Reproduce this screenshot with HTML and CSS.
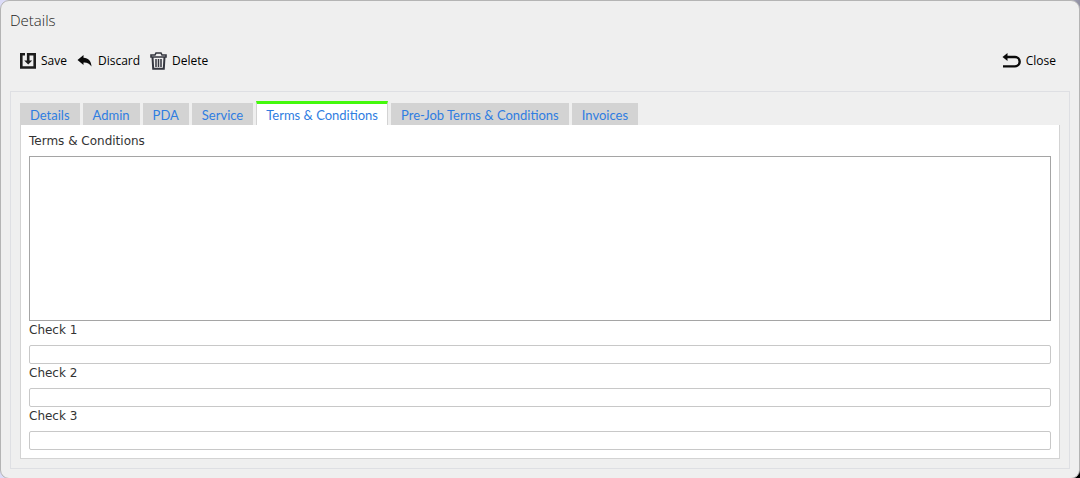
FILE: index.html
```html
<!DOCTYPE html>
<html lang="en">
<head>
  <meta charset="UTF-8" />
  <meta name="viewport" content="width=device-width, initial-scale=1.0" />
  <title>Details</title>
  <link rel="stylesheet" href="styles.css">
</head>
<body>

  <main class="dialog">
    <h1 class="dialog-title">Details</h1>

    <!-- Toolbar -->
    <div class="toolbar">
      <button type="button" class="tool">
        <svg width="16" height="16" viewBox="0 0 16 16" fill="none" stroke="#1c1c1c" aria-hidden="true">
          <path d="M5 1.200H1.300V14.500H14.700V1.200H8.200V9" stroke-width="2.600" />
          <path d="M4.200 7.500H12.200L8.200 11.500Z" fill="#1c1c1c" stroke="none" />
        </svg>
        Save
      </button>
      <button type="button" class="tool">
        <svg width="16" height="16" viewBox="0 0 16 16" aria-hidden="true">
          <path d="M6.500 2L0.500 7L6.500 12V9.500C10 9.300 12.500 10.400 14.500 13.500C14.400 8.500 11.500 5 6.500 4.800Z" fill="#0a0a0a" />
        </svg>
        Discard
      </button>
      <button type="button" class="tool">
        <svg width="17" height="18" viewBox="0 0 17 18" fill="none" stroke="#34363f" aria-hidden="true">
          <path d="M1 5V3H5L6 1H11L12 3H16V5Z" stroke-width="1.600" />
          <path d="M2.500 5L3.200 16.800H13.800L14.500 5" stroke-width="2" />
          <path d="M6 7V15M8.500 7V15M11 7V15" stroke-width="1.500" />
        </svg>
        Delete
      </button>
      <button type="button" class="tool tool-close">
        <svg width="19" height="16" viewBox="0 0 19 16" fill="none" stroke="#0a0a0a" aria-hidden="true">
          <path d="M3 4H13A4.700 4.700 0 0 1 13 13.400H1" stroke-width="2.400" />
          <path d="M5.500 0V8L0.500 4Z" fill="#0a0a0a" stroke="none" />
        </svg>
        Close
      </button>
    </div>

    <div class="panel">
      <!-- Tabs -->
      <nav class="tabs">
        <a href="#details">Details</a>
        <a href="#admin">Admin</a>
        <a href="#pda">PDA</a>
        <a href="#service">Service</a>
        <a href="#terms" class="active">Terms &amp; Conditions</a>
        <a href="#prejob">Pre-Job Terms &amp; Conditions</a>
        <a href="#invoices">Invoices</a>
      </nav>

      <form class="tab-body" id="terms">
        <label for="termsText">Terms &amp; Conditions</label>
        <textarea id="termsText"></textarea>
        <label for="check1">Check 1</label>
        <input type="text" id="check1" />
        <label for="check2">Check 2</label>
        <input type="text" id="check2" />
        <label for="check3">Check 3</label>
        <input type="text" id="check3" />
      </form>
    </div>
  </main>

</body>
</html>
```
FILE: styles.css
```css
* {
  box-sizing: border-box;
}
body {
  margin: 0;
  font-family: "Open Sans", sans-serif;
  font-size: 12px;
  background: linear-gradient(100deg, #dcdcf8 90%, #000 98%);
}
.dialog {
  padding: 9px;
  background-color: #efefef;
  border: 1px solid #b4b4b4;
  border-radius: 9px;
}
.dialog-title {
  margin: 0;
  font-size: 15px;
  font-weight: 300;
  line-height: 20px;
  color: #222;
}
.toolbar {
  display: flex;
  align-items: center;
  gap: 10px;
  height: 40px;
  margin: 11px 14px 10px 10px;
}
.tool {
  display: flex;
  align-items: center;
  gap: 5px;
  padding: 0;
  border: none;
  background: none;
  font-family: inherit;
  font-size: 12px;
  line-height: 16px;
  color: #000;
  cursor: pointer;
}
.tool-close {
  margin-left: auto;
}
.panel {
  padding: 9px;
  border: 1px solid #dedfe3;
}
.tabs {
  display: flex;
  align-items: flex-end;
  gap: 3px;
}
.tabs a {
  height: 22px;
  padding: 0 10px;
  font-family: Lato, sans-serif;
  font-size: 13px;
  line-height: 24px;
  color: #2f7de1;
  text-decoration: none;
  background-color: #d3d3d3;
}
.tabs a.active {
  height: 24px;
  padding: 0 9px;
  line-height: 22px;
  background-color: #fff;
  border: 1px solid #d3d3d3;
  border-top: 3px solid #44f90c;
  border-bottom: none;
}
.tab-body {
  display: flex;
  flex-direction: column;
  padding: 8px;
  background-color: #fff;
  border: 1px solid #d3d3d3;
  border-top: none;
}
.tab-body label {
  margin-bottom: 7px;
  font-family: "DejaVu Sans", sans-serif;
  font-size: 12px;
  line-height: 16px;
  color: #333;
}
input + label,
textarea + label {
  padding-top: 1px;
}
textarea {
  height: 165px;
  border: 1px solid #a5a5a5;
  resize: none;
}
input {
  height: 19px;
  border: 1px solid #c8c8c8;
  border-radius: 2px;
}
```
